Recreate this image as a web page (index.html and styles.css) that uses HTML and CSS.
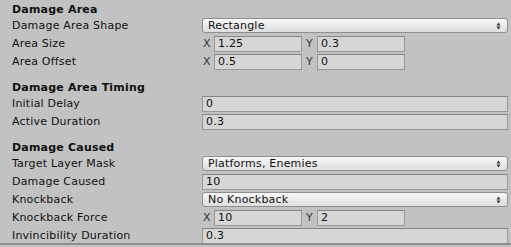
FILE: index.html
```html
<!DOCTYPE html>
<html>
<head>
<meta charset="utf-8">
<link rel="stylesheet" href="styles.css">
</head>
<body>
<div class="panel">
  <section class="section">
    <div class="header">Damage Area</div>
    <div class="row"><div class="label">Damage Area Shape</div><div class="value"><div class="popup"><span>Rectangle</span><svg class="arrow" width="5" height="8" viewBox="0 0 5 8"><path d="M0.5 3.5 L2.5 0.5 L4.5 3.5 Z M0.5 4.5 L2.5 7.5 L4.5 4.5 Z" fill="#333"/></svg></div></div></div>
    <div class="row"><div class="label">Area Size</div><div class="value vec"><div class="comp"><span class="axis">X</span><div class="field">1.25</div></div><div class="comp"><span class="axis">Y</span><div class="field">0.3</div></div></div></div>
    <div class="row"><div class="label">Area Offset</div><div class="value vec"><div class="comp"><span class="axis">X</span><div class="field">0.5</div></div><div class="comp"><span class="axis">Y</span><div class="field">0</div></div></div></div>
  </section>
  <section class="section">
    <div class="header">Damage Area Timing</div>
    <div class="row"><div class="label">Initial Delay</div><div class="value"><div class="field">0</div></div></div>
    <div class="row"><div class="label">Active Duration</div><div class="value"><div class="field">0.3</div></div></div>
  </section>
  <section class="section">
    <div class="header">Damage Caused</div>
    <div class="row"><div class="label">Target Layer Mask</div><div class="value"><div class="popup"><span>Platforms, Enemies</span><svg class="arrow" width="5" height="8" viewBox="0 0 5 8"><path d="M0.5 3.5 L2.5 0.5 L4.5 3.5 Z M0.5 4.5 L2.5 7.5 L4.5 4.5 Z" fill="#333"/></svg></div></div></div>
    <div class="row"><div class="label">Damage Caused</div><div class="value"><div class="field">10</div></div></div>
    <div class="row"><div class="label">Knockback</div><div class="value"><div class="popup"><span>No Knockback</span><svg class="arrow" width="5" height="8" viewBox="0 0 5 8"><path d="M0.5 3.5 L2.5 0.5 L4.5 3.5 Z M0.5 4.5 L2.5 7.5 L4.5 4.5 Z" fill="#333"/></svg></div></div></div>
    <div class="row"><div class="label">Knockback Force</div><div class="value vec"><div class="comp"><span class="axis">X</span><div class="field">10</div></div><div class="comp"><span class="axis">Y</span><div class="field">2</div></div></div></div>
    <div class="row"><div class="label">Invincibility Duration</div><div class="value"><div class="field">0.3</div></div></div>
  </section>
</div>
</body>
</html>
```
FILE: styles.css
```css
html, body {
  margin: 0;
  padding: 0;
  background: #c2c2c2;
}
body {
  width: 511px;
  height: 247px;
  overflow: hidden;
  font-family: "DejaVu Sans", sans-serif;
  font-size: 11px;
  letter-spacing: 0.2px;
  color: #111;
}
.panel {
  height: 245px;
  box-sizing: border-box;
  border-bottom: 2px solid #8e8e8e;
  padding: 0 3px 0 12px;
  overflow: hidden;
  display: flex;
  flex-direction: column;
  gap: 8px;
}
.section {
  display: flex;
  flex-direction: column;
  gap: 2px;
}
.header {
  height: 16px;
  line-height: 16px;
  padding-top: 2px;
  margin-bottom: -2px;
  font-weight: bold;
}
.row {
  display: flex;
  height: 16px;
  align-items: flex-start;
}
.label {
  width: 190px;
  flex: none;
  line-height: 16px;
  white-space: nowrap;
}
.value {
  flex: 1;
  min-width: 0;
}
.field {
  height: 16px;
  box-sizing: border-box;
  background: #d6d6d6;
  border: 1px solid #989898;
  border-top-color: #868686;
  padding-left: 3px;
  line-height: 14px;
  white-space: nowrap;
}
.popup {
  height: 15px;
  box-sizing: border-box;
  border: 1px solid #8f8f8f;
  border-radius: 3px;
  background: linear-gradient(#f7f7f7, #dedede);
  padding: 0 6px 0 5px;
  display: flex;
  align-items: center;
  justify-content: space-between;
  line-height: 13px;
}
.arrow {
  display: block;
  flex: none;
}
.vec {
  display: flex;
  gap: 3px;
}
.comp {
  display: flex;
  width: 100px;
}
.axis {
  width: 12px;
  flex: none;
  line-height: 16px;
  padding-left: 1px;
  box-sizing: border-box;
  color: #333;
}
.comp .field {
  flex: 1;
}
```
